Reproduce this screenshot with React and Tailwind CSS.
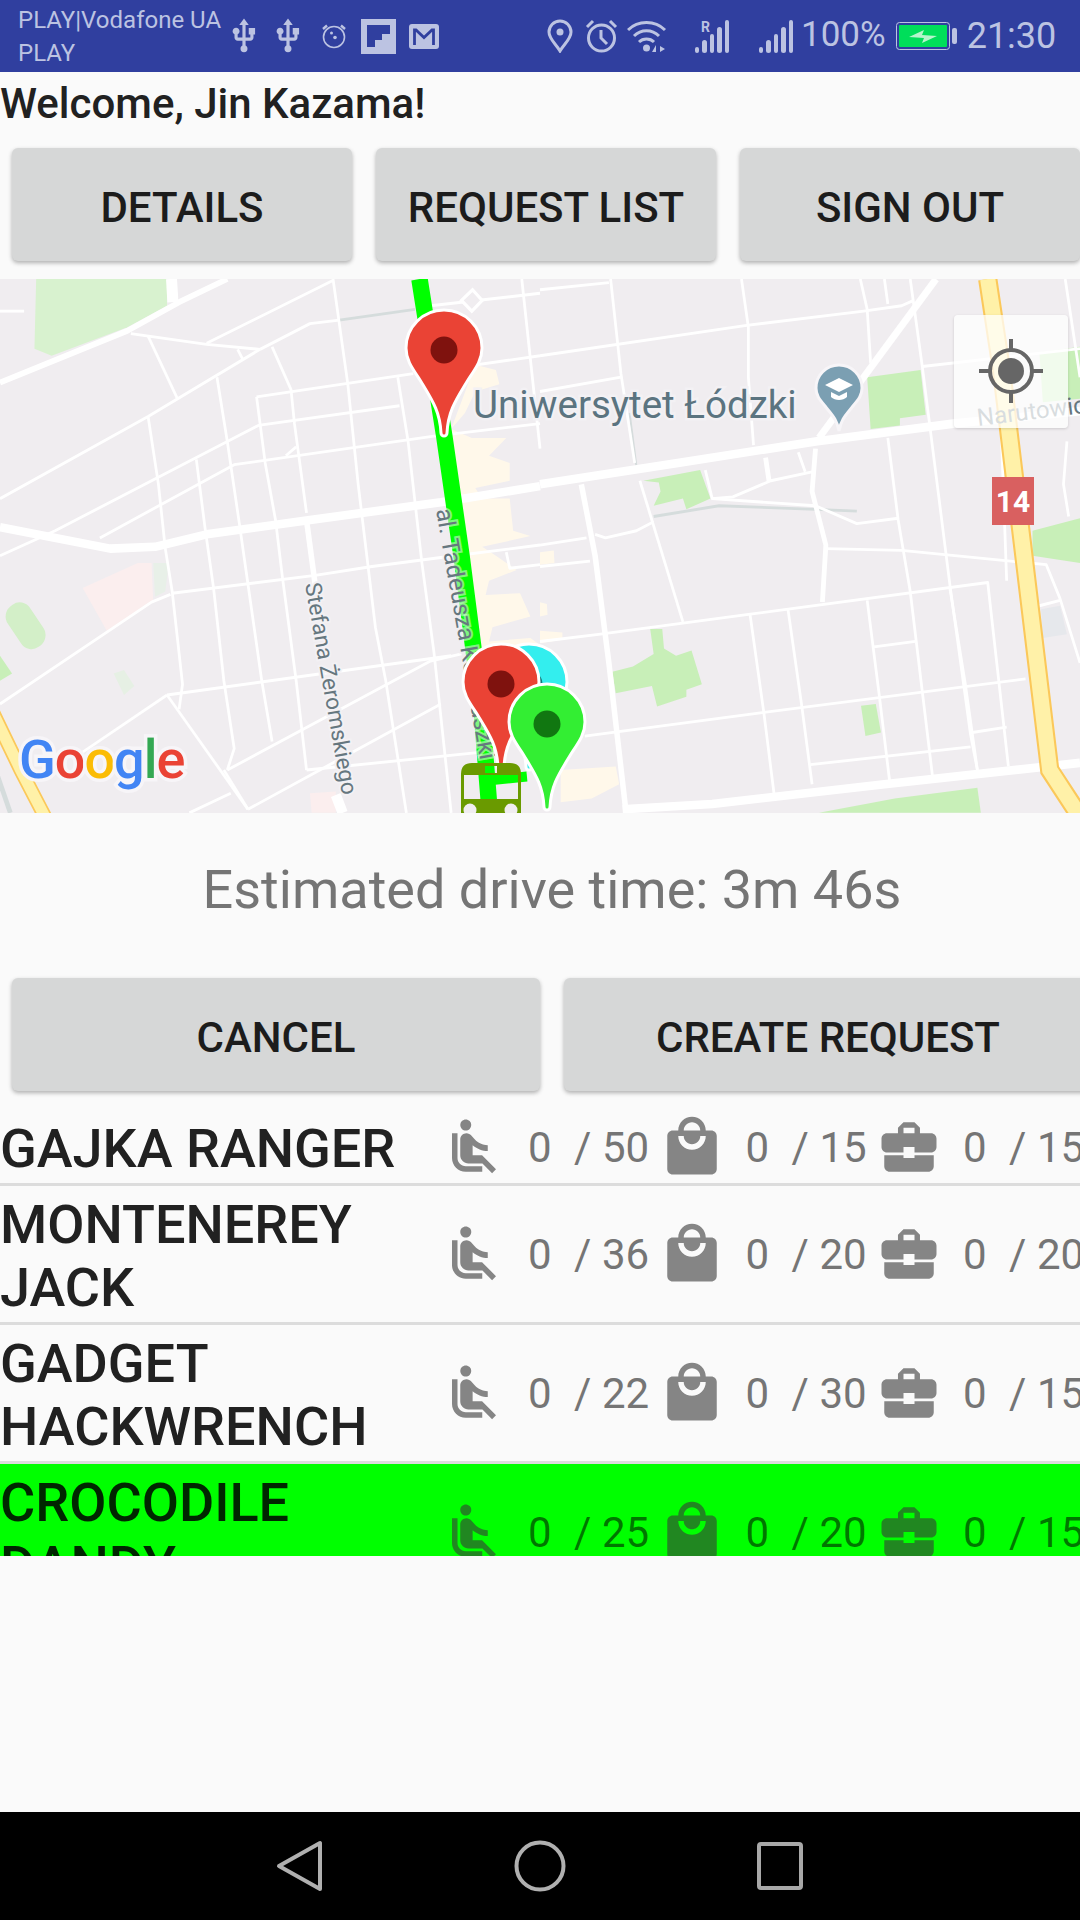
import { MdAirlineSeatReclineNormal, MdBusinessCenter, MdLocalMall, MdUsb } from 'react-icons/md';

// map traced from the screenshot; points are in crop units, scaled by the <g> transforms
const leftThin = [
    '380,178 600,208 755,222', '600,205 965,30', '755,222 900,150 985,140', '967,25 1010,320 1040,600 1090,1000 1120,1150 1180,1520',
    '0,640 430,410 755,222', '430,185 515,360', '690,222 705,250', '790,215 845,335 855,430 890,680',
    '745,355 1200,290', '745,355 770,540 800,700 820,860 860,1150 890,1400', '630,300 660,480 695,710 720,880 760,1150 790,1320',
    '430,410 460,600 480,780 500,900 530,1160 520,1230', '0,800 160,730 660,480 750,435 1160,380', '290,750 680,545 1260,465 1568,430',
    '570,530 595,720 620,890 650,1150 680,1340 660,1400', '1155,300 1185,480 1205,650 1225,820 1260,1070 1310,1520',
    '500,905 915,855 1080,830 1280,805 1568,770', '0,1215 440,930 495,908', '485,1190 1310,1080', '485,1190 720,1510', '485,1190 240,1350',
    '660,1400 1250,1095 1340,1075', '650,1400 720,1510', '550,1520 670,1465', '720,1510 1280,1215', '890,1400 1400,1350',
    '1250,100 1568,65', '1515,25 1568,500', '830,520 860,495', '1205,290 1568,240', '0,115 70,115', '1470,790 1480,835 1568,825',
];
const leftThick = [
    ['0,315 370,170 520,90 660,25', 16], ['498,25 502,90', 32], ['0,720 320,780 450,775 600,740 900,700 1280,650 1568,605', 24], ['890,700 915,880', 16], ['975,1470 995,1520', 30],
];
const rightThin = [
    '0,55 200,35', '205,25 235,290 275,540', '585,25 605,160 605,300 620,490', '930,25 950,110 960,260', '1000,25 1010,95', '1075,25 1110,270 1135,460 1190,880 1250,1300 1270,1400',
    '0,240 600,155 940,115 1050,100 1085,85', '0,340 235,300', '1525,25 1568,300', '1530,480 1520,600 1535,690', '290,590 415,985',
    '0,770 135,750', '0,830 145,815', '160,740 190,750 280,730 330,705', '480,560 500,640 800,660 920,710 1040,695', '500,640 560,635 670,590 790,565',
    '750,510 770,565', '830,780 1050,785 1470,825 1510,920 1568,1100', '1010,470 1040,700 1075,900 1110,1180 1140,1420', '0,1040 170,1020 600,965 1300,875 1360,1390',
    '610,965 650,1240 680,1470', '720,950 760,1220 790,1440', '950,925 985,1190 1015,1430', '970,1055 1090,1040', '1190,890 1235,1160 1270,1400',
    '130,1305 640,1240 1410,1145', '1255,1295 1355,1280', '785,1385 1250,1335', '1450,940 1510,925', '1340,470 1355,870', '1110,270 1568,220',
];
const rightThick = [
    ['0,600 400,540 800,480 1200,430 1568,395', 24], ['810,470 1150,25', 20], ['120,600 160,800 200,1100 250,1520', 16], ['655,525 665,590', 14],
    ['800,500 790,620 830,770 820,930', 14], ['240,1510 500,1495 1000,1440 1568,1380', 24],
];
const rightParks = [
    '950,300 1105,280 1120,405 1045,415 1045,435 960,445', '300,590 465,560 495,640 425,670 415,640 330,660 350,620 345,595',
    '210,1125 270,1110 330,1075 320,1005 355,1005 360,1060 395,1080 440,1065 470,1160 425,1175 425,1195 340,1222 325,1165 220,1185',
    '932,1220 975,1215 990,1295 945,1305', '1430,730 1568,695 1568,820 1430,800', '810,1520 1030,1480 1270,1450 1280,1520', '1450,230 1568,215 1568,360 1460,370',
];
const rightCream = ['60,1400 220,1390 230,1440 150,1480 60,1490', '0,790 40,785 42,820 0,825', '0,930 20,935 22,965 0,970', '0,1010 65,1015 65,1035 0,1045'];

function Road({ points, width = 8, color = '#ffffff' }) {
    return <polyline points={points} fill="none" stroke={color} strokeWidth={width} strokeLinejoin="round" />;
}

function Pin({ x, y, fill, dot }) {
    return (
        <g transform={`translate(${x} ${y})`}>
            <path
                d="M-3 -3C-4 -25 -12 -36 -24 -56C-32 -68 -38 -76 -38 -88A38 38 0 1 1 38 -88C38 -76 32 -68 24 -56C12 -36 4 -25 3 -3A3 3 0 0 1 -3 -3Z"
                fill={fill}
                stroke="#ffffff"
                strokeWidth="3"
            />
            <circle cx="0" cy="-86" r="13.5" fill={dot} />
        </g>
    );
}

function MapView() {
    return (
        <div className="relative h-[534px] w-[1080px] mt-[18px] overflow-hidden bg-[#f0edf0]">
            <svg viewBox="0 0 1080 534" className="block h-[534px] w-[1080px] [font-family:Roboto,sans-serif]">
                <g transform="scale(0.3444 0.3571) translate(0 -25)">
                    <polygon points="105,25 485,25 485,100 370,160 150,240 100,220" fill="#d8f2cf" />
                    <polygon points="0,1080 35,1130 0,1150" fill="#c8efb8" />
                    <rect x="-25" y="-65" width="78" height="140" rx="36" transform="translate(60 1000) rotate(-35)" fill="#d3efc8" />
                    <polygon points="445,820 490,820 480,900 450,915" fill="#e8f0e8" />
                    <polygon points="330,1130 360,1120 390,1165 360,1190" fill="#e6f0e4" />
                    <polygon points="240,890 400,820 440,820 445,930 310,1010" fill="#fbeeee" />
                    <polygon points="900,1465 975,1460 975,1520 905,1520" fill="#fbeeee" />
                    <polygon
                        points="1380,265 1440,280 1450,320 1380,340 1350,400 1310,445 1370,470 1470,470 1420,520 1480,540 1480,590 1380,610 1400,640 1480,640 1490,730 1540,745 1400,775 1440,800 1500,840 1420,870 1410,910 1510,905 1540,970 1430,1000 1420,1040 1540,1030 1568,1050 1400,1060 1360,800 1300,470"
                        fill="#fff8ea"
                    />
                    {/* lower left highway */}
                    <polyline points="-20,1240 60,1400 130,1530" fill="none" stroke="#fbc85a" strokeWidth="42" />
                    <polyline points="-20,1240 60,1400 130,1530" fill="none" stroke="#fff1a8" strokeWidth="32" />
                    <polyline points="-20,1380 30,1520" fill="none" stroke="#d5dcdc" strokeWidth="14" />
                    <polyline points="985,140 1205,110" fill="none" stroke="#d5dcdc" strokeWidth="8" />
                    {leftThin.map((p) => (
                        <Road key={p} points={p} />
                    ))}
                    {leftThick.map(([p, w]) => (
                        <Road key={p} points={p} width={w} />
                    ))}
                    <polygon points="1340,85 1372,55 1400,85 1370,115" fill="#f0edf0" stroke="#ffffff" strokeWidth="9" />
                </g>
                <g transform="translate(540 0) scale(0.3444 0.3571) translate(0 -25)">
                    {rightParks.map((p) => (
                        <polygon key={p} points={p} fill="#c8efb8" />
                    ))}
                    {rightCream.map((p) => (
                        <polygon key={p} points={p} fill="#fff8ea" />
                    ))}
                    <polygon points="1455,950 1510,940 1530,1020 1460,1030" fill="#e6e8ec" />
                    <polyline points="330,690 520,660 800,670 920,675" fill="none" stroke="#d5dcdc" strokeWidth="8" />
                    <polyline points="260,400 280,550" fill="none" stroke="#d5dcdc" strokeWidth="6" />
                    {rightThin.map((p) => (
                        <Road key={p} points={p} />
                    ))}
                    {rightThick.map(([p, w]) => (
                        <Road key={p} points={p} width={w} />
                    ))}
                    <polyline points="1300,25 1340,280 1380,600 1430,1000 1480,1400 1568,1530" fill="none" stroke="#fbc85a" strokeWidth="56" />
                    <polyline points="1300,25 1340,280 1380,600 1430,1000 1480,1400 1568,1530" fill="none" stroke="#fff1a8" strokeWidth="44" />
                </g>

                {/* route */}
                <g transform="scale(0.3444 0.3571) translate(0 -25)">
                    <polyline points="1218,25 1290,465 1340,800 1400,1250 1422,1520" fill="none" stroke="#00ff00" strokeWidth="48" />
                    <polyline points="1430,1428 1530,1418" fill="none" stroke="#00ff00" strokeWidth="28" />
                </g>

                {/* labels */}
                <text x="473" y="139" fontSize="38.5" fill="#5b7480" stroke="#f3f1f4" strokeWidth="5" className="[paint-order:stroke]">
                    Uniwersytet Łódzki
                </text>
                <text transform="translate(436 231) rotate(80)" fontSize="24" fill="#66777f" stroke="#f0edf0" strokeOpacity="0.55" strokeWidth="4" className="[paint-order:stroke]">
                    al. Tadeusza Kościuszki
                </text>
                <text transform="translate(305 305) rotate(80)" fontSize="22.6" fill="#66777f" stroke="#f3f1f4" strokeWidth="4" className="[paint-order:stroke]">
                    Stefana Żeromskiego
                </text>
                <text transform="translate(978 147) rotate(-7)" fontSize="24" fill="#66777f">
                    Narutowicza
                </text>
                <g fontWeight="500" fontSize="54" stroke="#f7f5f8" strokeWidth="7" className="[paint-order:stroke]">
                    <text x="19" y="499" letterSpacing="-1">
                        <tspan fill="#4285f4">G</tspan>
                        <tspan fill="#ea4335">o</tspan>
                        <tspan fill="#fbbc05">o</tspan>
                        <tspan fill="#4285f4">g</tspan>
                        <tspan fill="#34a853">l</tspan>
                        <tspan fill="#ea4335">e</tspan>
                    </text>
                </g>

                {/* university pin */}
                <g transform="translate(839 152)">
                    <path
                        d="M0 0C-2 -12 -8 -17 -14 -25C-20 -32 -23 -36 -23 -43A23 23 0 1 1 23 -43C23 -36 20 -32 14 -25C8 -17 2 -12 0 0Z"
                        fill="#7b9fb2"
                        stroke="#f7f5f8"
                        strokeWidth="3"
                    />
                    <path d="M0 -53L-14 -46L0 -39L14 -46ZM-8 -39V-34C-4 -30 4 -30 8 -34V-39L0 -35Z" fill="#ffffff" />
                </g>

                {/* sign 14 */}
                <rect x="992" y="198" width="42" height="48" fill="#d96060" />
                <text x="1013" y="233" textAnchor="middle" fontSize="30" fontWeight="700" fill="#ffffff">
                    14
                </text>

                {/* markers */}
                <Pin x={529} y={491} fill="#33eeee" dot="#117777" />
                <Pin x={444} y={157} fill="#ea4335" dot="#7f120e" />
                <Pin x={501} y={491} fill="#ea4335" dot="#7f120e" />
                <path
                    d="M461 534V495Q461 484 472 484H510Q521 484 521 495V534ZM464 496V520H518V496ZM485 487V494H497V487Z"
                    fill="#6a9a00"
                    fillRule="evenodd"
                />
                <circle cx="470" cy="531" r="6.5" fill="#f0edf0" />
                <circle cx="511" cy="531" r="6.5" fill="#f0edf0" />
                <Pin x={547} y={531} fill="#33ee33" dot="#117711" />
            </svg>

            {/* my location button */}
            <div className="absolute left-[954px] top-[36px] flex h-[113px] w-[114px] items-start justify-center rounded-[4px] bg-white/75 pt-[24px] shadow-[0_1px_3px_rgba(0,0,0,0.15)]">
                <svg viewBox="0 0 64 64" className="h-[64px] w-[64px]" fill="none" stroke="#666666">
                    <circle cx="32" cy="32" r="21" strokeWidth="4" />
                    <circle cx="32" cy="32" r="13" fill="#666666" stroke="none" />
                    <path d="M32 0V11M32 53V64M0 32H11M53 32H64" strokeWidth="4" />
                </svg>
            </div>
        </div>
    );
}

function ActionButton({ label, width }) {
    return (
        <button className={`${width} h-[113px] shrink-0 rounded-[6px] bg-[#d6d7d7] pt-[5px] text-[42px] font-medium text-[#1c1c1c] shadow-[0_2px_4px_rgba(0,0,0,0.3)]`}>
            {label}
        </button>
    );
}

function Stat({ Icon, used, total, iconClass }) {
    return (
        <div className="flex w-[217.5px] shrink-0 items-center">
            <Icon className={`h-[66px] w-[66px] shrink-0 ${iconClass}`} />
            <span className="ml-[21px] w-[46px] shrink-0">{used}</span>
            <span className="w-[28px] shrink-0">/</span>
            <span className="shrink-0">{total}</span>
        </div>
    );
}

function BusRow({ name, seats, bags, cases, active, height }) {
    const iconClass = active ? 'text-[#37373799]' : 'text-[#858585]';
    return (
        <div className={`flex ${height} w-[1140px] shrink-0 items-center ${active ? 'bg-[#00ff00]' : ''}`}>
            <div className={`w-[441px] shrink-0 pt-[4px] text-[54px] font-medium leading-[63.5px] ${active ? 'text-black/85' : 'text-[#212121]'}`}>{name}</div>
            <div className={`flex items-center text-[42px] ${active ? 'text-black/[0.54]' : 'text-[#757575]'}`}>
                <Stat Icon={MdAirlineSeatReclineNormal} used="0" total={seats} iconClass={iconClass} />
                <Stat Icon={MdLocalMall} used="0" total={bags} iconClass={iconClass} />
                <Stat Icon={MdBusinessCenter} used="0" total={cases} iconClass={iconClass} />
            </div>
        </div>
    );
}

function SignalBars({ className, roaming }) {
    return (
        <div className={`relative flex h-[33px] w-[34px] shrink-0 items-end gap-[3px] ${className}`}>
            {roaming && <span className="absolute left-[6px] top-0 text-[14px] font-bold leading-[14px]">R</span>}
            <span className="h-[6px] w-[4.4px] rounded-full bg-current" />
            <span className="h-[13px] w-[4.4px] rounded-full bg-current" />
            <span className="h-[19px] w-[4.4px] rounded-full bg-current" />
            <span className="h-[26px] w-[4.4px] rounded-full bg-current" />
            <span className="h-[33px] w-[4.4px] rounded-full bg-current" />
        </div>
    );
}

function StatusBar() {
    const icon = 'shrink-0';
    return (
        <div className="flex h-[72px] w-[1080px] shrink-0 items-center bg-[#303f9f] text-[#bcc3e2]">
            <div className="ml-[18px] mt-[2px] w-[205px] shrink-0 text-[24px] leading-[33px] whitespace-nowrap">
                <div>PLAY|Vodafone UA</div>
                <div>PLAY</div>
            </div>
            <MdUsb className={`${icon} ml-[2px] h-[38px] w-[38px]`} />
            <MdUsb className={`${icon} ml-[6px] h-[38px] w-[38px]`} />
            <svg viewBox="0 0 26 26" className={`${icon} ml-[14px] h-[26px] w-[26px]`} fill="none" stroke="currentColor" strokeWidth="1.6">
                <circle cx="13" cy="14" r="10.5" />
                <circle cx="10.5" cy="10" r="1.5" fill="currentColor" stroke="none" />
                <circle cx="14" cy="14.5" r="1.8" fill="currentColor" stroke="none" />
                <path d="M2 6L6 2.5M24 6L20 2.5" strokeWidth="2.4" />
            </svg>
            <svg viewBox="0 0 35 35" className={`${icon} ml-[14px] h-[35px] w-[35px]`}>
                <path fillRule="evenodd" fill="currentColor" d="M0 0H35V35H0ZM6 6V28H14V21H21V15H29V6Z" />
            </svg>
            <svg viewBox="0 0 30 25" className={`${icon} ml-[13px] h-[25px] w-[30px]`}>
                <rect x="0" y="0" width="30" height="25" rx="3" fill="currentColor" />
                <path d="M5.5 21V6H7L15 13.5L23 6H24.5V21" fill="none" stroke="#303f9f" strokeWidth="2.8" />
            </svg>

            {/* right side */}
            <svg viewBox="0 0 26 34" className={`${icon} ml-[108px] h-[34px] w-[26px]`} fill="none" stroke="currentColor" strokeWidth="3">
                <path d="M13 32C9 25 2 20 2 13A11 11 0 0 1 24 13C24 20 17 25 13 32Z" />
                <circle cx="13" cy="13" r="3.5" fill="currentColor" stroke="none" />
            </svg>
            <svg viewBox="0 0 33 34" className={`${icon} ml-[12px] h-[34px] w-[33px]`} fill="none" stroke="currentColor" strokeWidth="3">
                <circle cx="16.5" cy="19" r="13" />
                <path d="M16 11V19L22 25M2 8L8 2M31 8L25 2" />
            </svg>
            <svg viewBox="0 0 41 34" className={`${icon} ml-[9px] h-[34px] w-[41px]`} fill="none" stroke="currentColor" strokeWidth="3">
                <path d="M1 11C11 1 28 1 38 11M7 17C14 10 25 10 32 17M12 23C16 19 23 19 27 23" />
                <circle cx="19.5" cy="29" r="3.5" fill="currentColor" stroke="none" />
                <path d="M29 33V26L25 33ZM33 27V33L38 30Z" fill="currentColor" stroke="none" />
            </svg>
            <SignalBars className="ml-[27px]" roaming />
            <SignalBars className="ml-[30px]" />
            <span className="ml-[8px] shrink-0 text-[35px] leading-none -mt-[3px]">100%</span>
            <svg viewBox="0 0 61 28" className={`${icon} ml-[10px] h-[28px] w-[61px]`}>
                <rect x="0.5" y="0.5" width="53" height="27" rx="3" fill="none" stroke="currentColor" />
                <rect x="3" y="3" width="48" height="22" rx="1" fill="#00de5a" />
                <path d="M13 15L28 8L26 13L41 14L26 21L28 16Z" fill="#b5f5cc" />
                <rect x="56" y="6" width="5" height="16" rx="2" fill="currentColor" />
            </svg>
            <span className="ml-[10px] shrink-0 text-[36px] leading-none">21:30</span>
        </div>
    );
}

function NavBar() {
    return (
        <div className="flex h-[108px] w-[1080px] shrink-0 items-center bg-black">
            <svg viewBox="0 0 46 52" className="ml-[276px] h-[52px] w-[46px]" fill="none" stroke="#b0b0b0" strokeWidth="4" strokeLinejoin="round">
                <path d="M44 3V49L3 26Z" />
            </svg>
            <svg viewBox="0 0 52 52" className="ml-[192px] h-[52px] w-[52px]" fill="none" stroke="#b0b0b0" strokeWidth="4">
                <circle cx="26" cy="26" r="23.5" />
            </svg>
            <svg viewBox="0 0 46 48" className="ml-[191px] h-[48px] w-[46px]" fill="none" stroke="#a8a8a8" strokeWidth="4" strokeLinejoin="round">
                <rect x="2" y="2" width="42" height="44" rx="2" />
            </svg>
        </div>
    );
}

export default function App() {
    return (
        <div className="flex h-[1920px] w-[1080px] flex-col overflow-hidden bg-[#fafafa] [font-family:Roboto,sans-serif]">
            <StatusBar />
            <div className="pt-[7px] text-[42px] font-medium leading-[49px] text-[#212121]">Welcome, Jin Kazama!</div>
            <div className="mt-[20px] flex gap-[24px] pl-[12px]">
                <ActionButton label="DETAILS" width="w-[340px]" />
                <ActionButton label="REQUEST LIST" width="w-[340px]" />
                <ActionButton label="SIGN OUT" width="w-[340px]" />
            </div>
            <MapView />
            <div className="h-[165px] pl-[24px] pt-[45px] text-center text-[54px] leading-[64px] text-[#757575]">Estimated drive time: 3m 46s</div>
            <div className="flex gap-[24px] pl-[12px]">
                <ActionButton label="CANCEL" width="w-[528px]" />
                <ActionButton label="CREATE REQUEST" width="w-[528px]" />
            </div>
            <div className="mt-[20px] flex h-[445px] w-[1080px] flex-col overflow-hidden">
                <BusRow name="GAJKA RANGER" seats="50" bags="15" cases="15" height="h-[72px]" />
                <div className="h-[3px] w-[1080px] shrink-0 bg-[#dcdcdc]" />
                <BusRow name="MONTENEREY JACK" seats="36" bags="20" cases="20" height="h-[136px]" />
                <div className="h-[3px] w-[1080px] shrink-0 bg-[#dcdcdc]" />
                <BusRow name="GADGET HACKWRENCH" seats="22" bags="30" cases="15" height="h-[136px]" />
                <div className="h-[3px] w-[1080px] shrink-0 bg-[#dcdcdc]" />
                <BusRow name="CROCODILE DANDY" seats="25" bags="20" cases="15" height="h-[136px]" active />
            </div>
            <div className="flex-1" />
            <NavBar />
        </div>
    );
}
